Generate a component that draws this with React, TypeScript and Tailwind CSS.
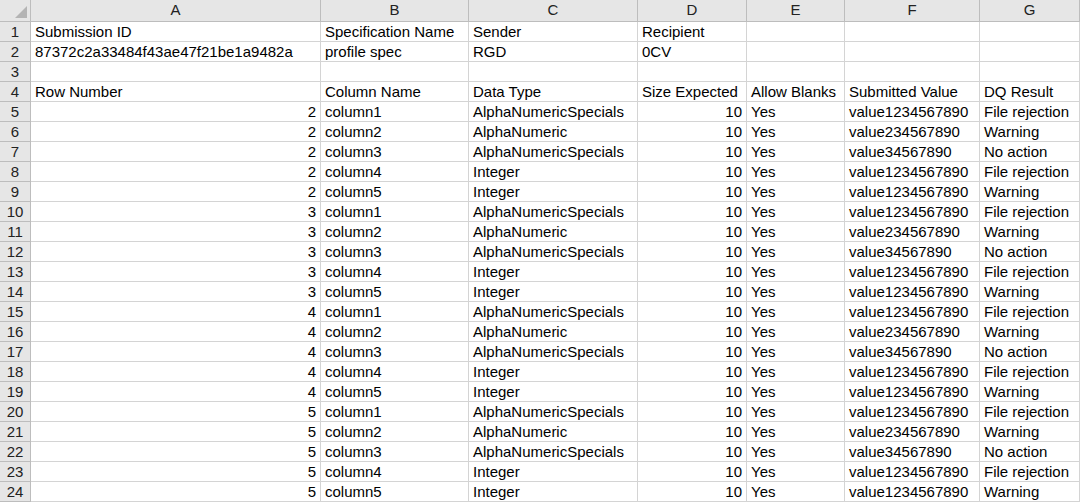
import React from "react";

const cols = ["A", "B", "C", "D", "E", "F", "G"];
const widths = ["w-[290px]", "w-[148px]", "w-[169px]", "w-[109px]", "w-[98px]", "w-[135px]", "w-[100px]"];

type Cell = { t: string; r?: boolean };
const rows: Cell[][] = [
  [{ t: "Submission ID" }, { t: "Specification Name" }, { t: "Sender" }, { t: "Recipient" }, { t: "" }, { t: "" }, { t: "" }],
  [{ t: "87372c2a33484f43ae47f21be1a9482a" }, { t: "profile spec" }, { t: "RGD" }, { t: "0CV" }, { t: "" }, { t: "" }, { t: "" }],
  [{ t: "" }, { t: "" }, { t: "" }, { t: "" }, { t: "" }, { t: "" }, { t: "" }],
  [{ t: "Row Number" }, { t: "Column Name" }, { t: "Data Type" }, { t: "Size Expected" }, { t: "Allow Blanks" }, { t: "Submitted Value" }, { t: "DQ Result" }],
];
const pat = [
  ["column1", "AlphaNumericSpecials", "value1234567890", "File rejection"],
  ["column2", "AlphaNumeric", "value234567890", "Warning"],
  ["column3", "AlphaNumericSpecials", "value34567890", "No action"],
  ["column4", "Integer", "value1234567890", "File rejection"],
  ["column5", "Integer", "value1234567890", "Warning"],
];
for (let n = 2; n <= 5; n++) {
  for (const p of pat) {
    rows.push([{ t: String(n), r: true }, { t: p[0] }, { t: p[1] }, { t: "10", r: true }, { t: "Yes" }, { t: p[2] }, { t: p[3] }]);
  }
}

export default function App() {
  return (
    <div className="w-[1080px] h-[504px] overflow-hidden bg-white text-[15px] text-black" style={{ fontFamily: '"Liberation Sans", Arial, sans-serif' }}>
      <div className="flex h-[22px]">
        <div className="relative w-[31px] h-[22px] shrink-0 bg-[#e6e6e6] border-r border-b border-[#bdbdbd]">
          <svg className="absolute right-[3px] bottom-[3px]" width="12" height="12" viewBox="0 0 12 12">
            <polygon points="12,0 12,12 0,12" fill="#b4b4b4" />
          </svg>
        </div>
        {cols.map((c, i) => (
          <div key={c} className={`${widths[i]} shrink-0 h-[22px] bg-[#e6e6e6] border-r border-b border-[#bdbdbd] flex items-center justify-center text-[#222]`}>
            {c}
          </div>
        ))}
      </div>
      {rows.map((row, ri) => (
        <div key={ri} className="flex h-[20px]">
          <div className="w-[31px] shrink-0 h-[20px] bg-[#e6e6e6] border-r border-b border-[#bdbdbd] flex items-center justify-center text-[#222] leading-none">
            {ri + 1}
          </div>
          {row.map((c, ci) => (
            <div key={ci} className={`${widths[ci]} shrink-0 h-[20px] border-r border-b border-[#d4d4d4] px-[4px] flex items-center whitespace-nowrap overflow-hidden leading-none ${c.r ? "justify-end" : ""}`}>
              {c.t}
            </div>
          ))}
        </div>
      ))}
    </div>
  );
}
